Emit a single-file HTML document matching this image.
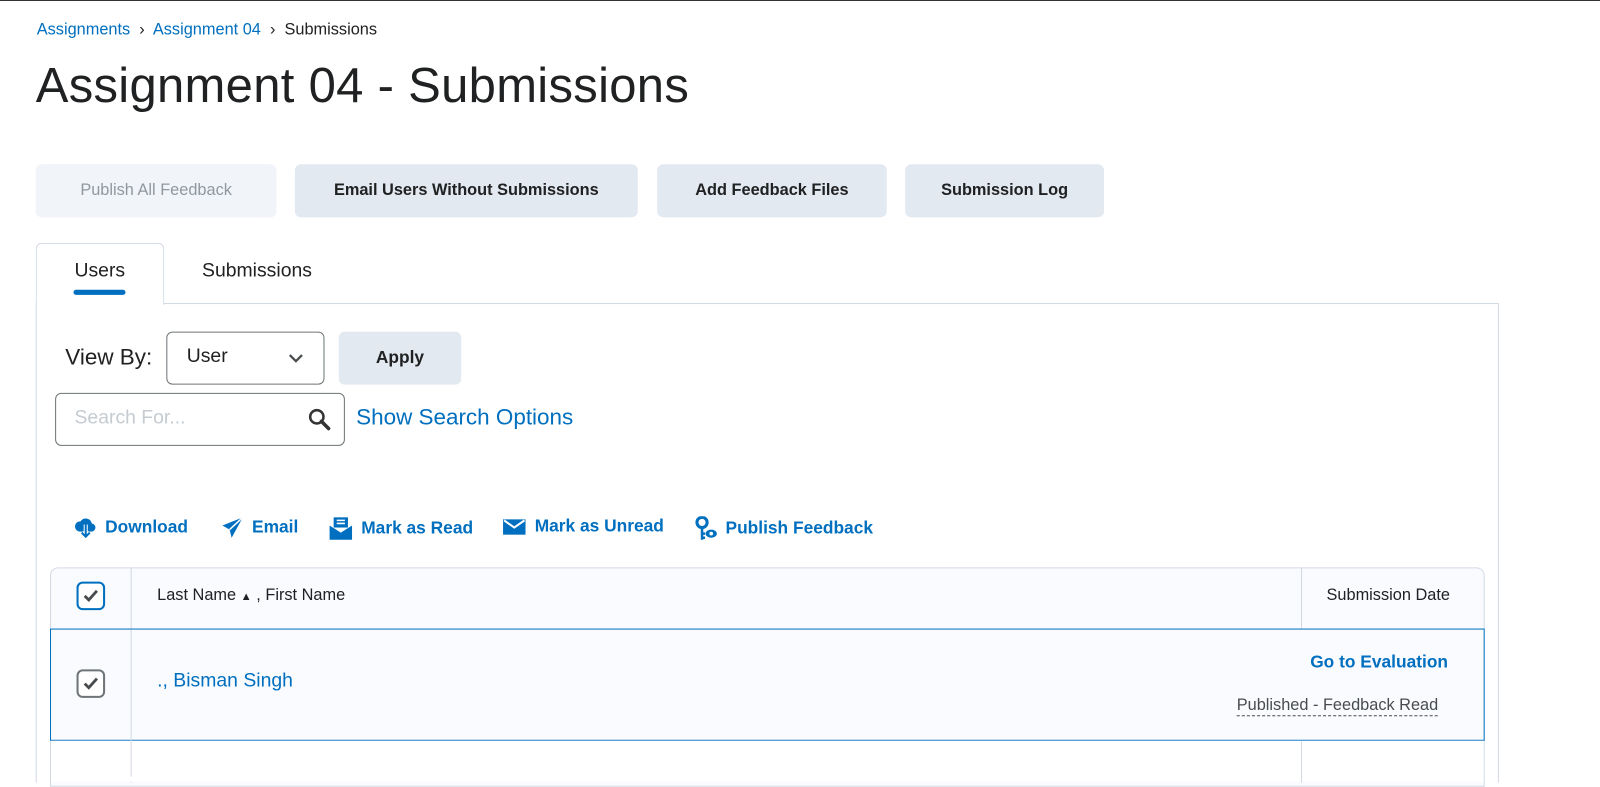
<!DOCTYPE html><html><head><style>
*{box-sizing:border-box;margin:0;padding:0}
body{width:1600px;height:760px;background:#fff;font-family:"Liberation Sans",sans-serif;color:#202122;position:relative;overflow:hidden;border-top:1px solid #333}
#w{position:absolute;left:0;top:0;width:1568px;height:745px;transform:scale(1.0204);transform-origin:0 0}
.a{position:absolute}
.blue{color:#006fbf}
.btn{position:absolute;top:160px;height:52px;background:#e3e9f1;border-radius:6px;font-weight:bold;font-size:16px;display:flex;align-items:center;justify-content:center;color:#202122}
.act{position:absolute;top:505px;font-size:17px;font-weight:bold;color:#006fbf;display:flex;align-items:center;gap:8px}
.cb{position:absolute;width:28px;height:28px;border:2px solid #6e7477;border-radius:6px;background:#fff;display:flex;align-items:center;justify-content:center}
</style></head><body><div id="w">
<div class="a" style="left:36px;top:20px;font-size:16px"><span class="blue">Assignments</span> &nbsp;›&nbsp; <span class="blue">Assignment 04</span> &nbsp;›&nbsp; Submissions</div>
<div class="a" style="left:35px;top:56px;font-size:48px;color:#202122;letter-spacing:0.3px">Assignment 04 - Submissions</div>
<div class="btn" style="left:35px;width:236px;background:#f1f4f8;color:#90989d;font-weight:normal">Publish All Feedback</div>
<div class="btn" style="left:289px;width:336px">Email Users Without Submissions</div>
<div class="btn" style="left:644px;width:225px">Add Feedback Files</div>
<div class="btn" style="left:887px;width:195px">Submission Log</div>
<div class="a" style="left:35px;top:296px;width:1434px;height:470px;border:1px solid #d3d9e3;border-bottom:none"></div>
<div class="a" style="left:35px;top:237px;width:126px;height:61px;border:1px solid #d3d9e3;border-bottom:none;border-radius:6px 6px 0 0;background:#fff"></div>
<div class="a" style="left:73px;top:254px;font-size:19px">Users</div>
<div class="a" style="left:72px;top:283px;width:51px;height:5px;border-radius:3px;background:#006fbf"></div>
<div class="a" style="left:198px;top:254px;font-size:19px">Submissions</div>
<div class="a" style="left:64px;top:336px;font-size:22px">View By:</div>
<div class="a" style="left:163px;top:324px;width:155px;height:52px;border:1px solid #6e7477;border-radius:6px;font-size:19px;padding:13px 0 0 19px">User<svg class="a" style="left:118px;top:20px" width="16" height="10" viewBox="0 0 16 10"><path d="M2 2l6 6 6-6" fill="none" stroke="#494c4e" stroke-width="2.2"/></svg></div>
<div class="a" style="left:332px;top:324px;width:120px;height:52px;background:#e3e9f1;border-radius:6px;font-weight:bold;font-size:17px;display:flex;align-items:center;justify-content:center">Apply</div>
<div class="a" style="left:54px;top:384px;width:284px;height:52px;border:1px solid #6e7477;border-radius:6px;font-size:19px;color:#c5cbd0;padding:13px 0 0 18px">Search For...<svg class="a" style="left:246px;top:13px" width="24" height="24" viewBox="0 0 24 24"><circle cx="9.5" cy="9.5" r="6.5" fill="none" stroke="#333" stroke-width="2.5"/><path d="M14 14l7 7" stroke="#333" stroke-width="3.5" stroke-linecap="round"/></svg></div>
<div class="a blue" style="left:349px;top:395px;font-size:22px">Show Search Options</div>
<div class="act" style="left:73px"><svg width="22" height="22" viewBox="0 0 22 22"><path d="M5 15a5 5 0 0 1 1-10 6 6 0 0 1 11 2 4 4 0 0 1-1 8z" fill="#006fbf"/><path d="M11 8v12M7 16l4 4 4-4" stroke="#fff" stroke-width="4"/><path d="M11 8v12M7 16l4 4 4-4" stroke="#006fbf" stroke-width="2" fill="none"/></svg>Download</div>
<div class="act" style="left:217px"><svg width="22" height="22" viewBox="0 0 22 22"><path d="M21 1L1 9l7 4 2 8z" fill="#006fbf"/><path d="M8 13L21 1" stroke="#fff" stroke-width="1.5"/></svg>Email</div>
<div class="act" style="left:322px"><svg width="24" height="24" viewBox="0 0 24 24"><rect x="5" y="1" width="14" height="10" fill="#006fbf"/><path d="M8 4h8M8 7h8" stroke="#fff" stroke-width="1.5"/><path d="M1 9l11 7 11-7v14H1z" fill="#006fbf"/></svg>Mark as Read</div>
<div class="act" style="left:492px"><svg width="24" height="20" viewBox="0 0 24 20"><rect x="1" y="3" width="22" height="15" fill="#006fbf"/><path d="M2 4l10 7 10-7" stroke="#fff" stroke-width="2" fill="none"/></svg>Mark as Unread</div>
<div class="act" style="left:681px"><svg width="22" height="24" viewBox="0 0 22 24"><circle cx="7" cy="6" r="5" fill="none" stroke="#006fbf" stroke-width="3"/><path d="M7 11v12M7 17h3M7 21h3" stroke="#006fbf" stroke-width="2.5"/><ellipse cx="16" cy="17" rx="5.5" ry="4" fill="#006fbf"/><circle cx="16" cy="17" r="1.8" fill="#fff"/></svg>Publish Feedback</div>
<div class="a" style="left:49px;top:555px;width:1406px;height:215px;border:1px solid #d3d9e3;border-radius:8px 8px 0 0;background:#f9fbff"></div>
<div class="a" style="left:128px;top:556px;width:1px;height:210px;background:#d3d9e3"></div>
<div class="a" style="left:1275px;top:556px;width:1px;height:210px;background:#d3d9e3"></div>
<div class="a" style="left:49px;top:615px;width:1406px;height:110px;border:1px solid #006fbf;background:#f9fbff"></div>
<div class="a" style="left:50px;top:725px;width:1404px;height:40px;background:#fff"></div>
<div class="a" style="left:128px;top:616px;width:1px;height:144px;background:#d3d9e3"></div>
<div class="a" style="left:1275px;top:726px;width:1px;height:40px;background:#d3d9e3"></div>
<div class="cb" style="left:75px;top:569px;border-color:#006fbf"><svg width="16" height="14" viewBox="0 0 16 14"><path d="M2 7l4 4 8-9" fill="none" stroke="#494c4e" stroke-width="2.8"/></svg></div>
<div class="a" style="left:154px;top:574px;font-size:16px">Last Name <span style="font-size:11px">▲</span> , First Name</div>
<div class="a" style="left:1300px;top:574px;font-size:16px">Submission Date</div>
<div class="cb" style="left:75px;top:655px"><svg width="16" height="14" viewBox="0 0 16 14"><path d="M2 7l4 4 8-9" fill="none" stroke="#494c4e" stroke-width="2.8"/></svg></div>
<div class="a blue" style="left:154px;top:656px;font-size:19px">., Bisman Singh</div>
<div class="a blue" style="left:1284px;top:638px;font-size:17px;font-weight:bold">Go to Evaluation</div>
<div class="a" style="left:1212px;top:682px;font-size:16px;color:#494c4e;border-bottom:1px dashed #494c4e;line-height:18px">Published - Feedback Read</div>
</div></body></html>
